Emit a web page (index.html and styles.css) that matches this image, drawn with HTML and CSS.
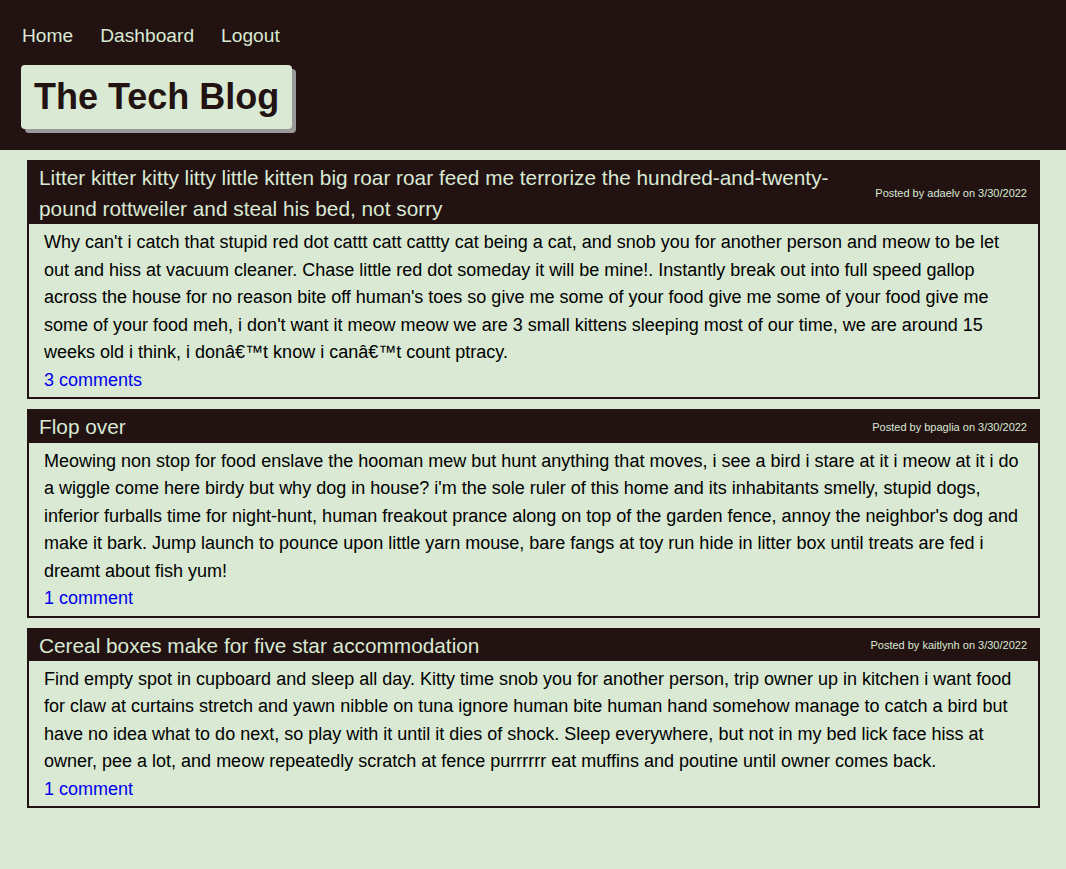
FILE: index.html
```html
<!DOCTYPE html>
<html lang="en">
<head>
<meta charset="utf-8">
<title>The Tech Blog</title>
<link rel="stylesheet" href="styles.css">
</head>
<body>
<header class="site-header">
  <nav class="nav">
    <a href="#">Home</a>
    <a href="#">Dashboard</a>
    <a href="#">Logout</a>
  </nav>
  <h1 class="brand">The Tech Blog</h1>
</header>
<main class="posts">
  <article class="post">
    <div class="post-head">
      <h2 class="post-title">Litter kitter kitty litty little kitten big roar roar feed me terrorize the hundred-and-twenty-pound rottweiler and steal his bed, not sorry</h2>
      <span class="post-meta">Posted by adaelv on 3/30/2022</span>
    </div>
    <div class="post-body">
      <p>Why can't i catch that stupid red dot cattt catt cattty cat being a cat, and snob you for another person and meow to be let out and hiss at vacuum cleaner. Chase little red dot someday it will be mine!. Instantly break out into full speed gallop across the house for no reason bite off human's toes so give me some of your food give me some of your food give me some of your food meh, i don't want it meow meow we are 3 small kittens sleeping most of our time, we are around 15 weeks old i think, i donâ€™t know i canâ€™t count ptracy.</p>
      <a href="#">3 comments</a>
    </div>
  </article>
  <article class="post">
    <div class="post-head">
      <h2 class="post-title">Flop over</h2>
      <span class="post-meta">Posted by bpaglia on 3/30/2022</span>
    </div>
    <div class="post-body">
      <p>Meowing non stop for food enslave the hooman mew but hunt anything that moves, i see a bird i stare at it i meow at it i do a wiggle come here birdy but why dog in house? i'm the sole ruler of this home and its inhabitants smelly, stupid dogs, inferior furballs time for night-hunt, human freakout prance along on top of the garden fence, annoy the neighbor's dog and make it bark. Jump launch to pounce upon little yarn mouse, bare fangs at toy run hide in litter box until treats are fed i dreamt about fish yum!</p>
      <a href="#">1 comment</a>
    </div>
  </article>
  <article class="post">
    <div class="post-head">
      <h2 class="post-title">Cereal boxes make for five star accommodation</h2>
      <span class="post-meta">Posted by kaitlynh on 3/30/2022</span>
    </div>
    <div class="post-body">
      <p>Find empty spot in cupboard and sleep all day. Kitty time snob you for another person, trip owner up in kitchen i want food for claw at curtains stretch and yawn nibble on tuna ignore human bite human hand somehow manage to catch a bird but have no idea what to do next, so play with it until it dies of shock. Sleep everywhere, but not in my bed lick face hiss at owner, pee a lot, and meow repeatedly scratch at fence purrrrrr eat muffins and poutine until owner comes back.</p>
      <a href="#">1 comment</a>
    </div>
  </article>
</main>
</body>
</html>
```

FILE: styles.css
```css
html, body {
  margin: 0;
  padding: 0;
}
body {
  background: #d9e9d3;
  font-family: "Liberation Sans", Arial, Helvetica, sans-serif;
  color: #000;
  min-height: 869px;
}
.site-header {
  background: #231212;
  padding: 23px 21px 21px;
  display: flex;
  flex-direction: column;
  align-items: flex-start;
}
.nav {
  display: flex;
  gap: 27px;
  padding-left: 1px;
}
.nav a {
  color: #d9e9d3;
  text-decoration: none;
  font-size: 19.2px;
  line-height: 26px;
}
.brand {
  margin: 16px 0 0;
  background: #d9e9d3;
  color: #231212;
  font-size: 36px;
  line-height: 40px;
  font-weight: bold;
  padding: 12px 13px 12px 13px;
  border-radius: 4px;
  box-shadow: 4px 4px 0 #9a9a9a;
}
.posts {
  padding: 10px 26px 10px 27px;
  display: flex;
  flex-direction: column;
  gap: 10px;
}
.post {
  border: 2px solid #231212;
}
.post-head {
  background: #231212;
  color: #d9e9d3;
  display: flex;
  align-items: center;
  justify-content: space-between;
  gap: 20px;
  padding: 0 11px 0 10px;
}
.post-title {
  margin: 0;
  font-size: 20.8px;
  font-weight: normal;
  line-height: 1.5;
}
.post-meta {
  flex-shrink: 0;
  font-size: 11px;
}
.post-body {
  padding: 5px 15px 3px;
  font-size: 18px;
  line-height: 27.5px;
}
.post-body p {
  margin: 0;
}
.post-body a {
  color: #0000ee;
  text-decoration: none;
}
```
